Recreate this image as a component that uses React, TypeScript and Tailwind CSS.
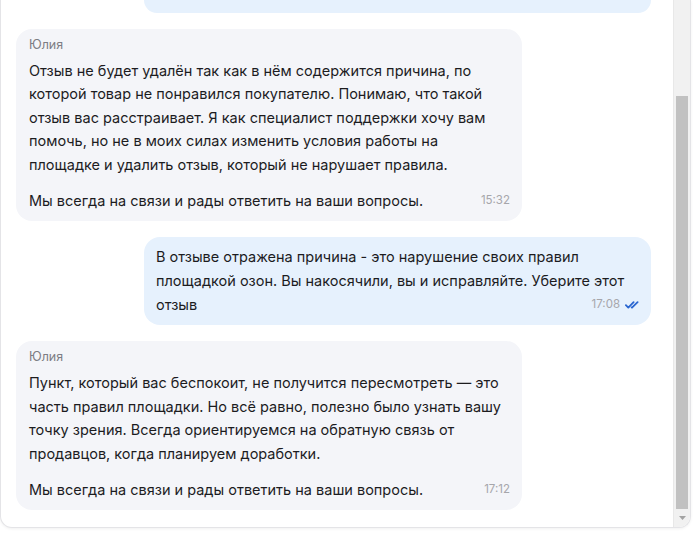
import React from "react";

const font = { fontFamily: "Inter, 'Noto Sans', sans-serif" };

function Time({ value, read }: { value: string; read?: boolean }) {
  return (
    <span className="absolute bottom-[9px] right-[12px] flex items-center gap-[5px] text-[11.5px] leading-[23px] text-[#a6a6ab]">
      {value}
      {read ? (
        <svg width="14" height="8" viewBox="0 0 14 8" fill="none">
          <path d="M0.9 4.2 L3.3 6.6 L8.6 1.2" stroke="#2a66d0" strokeWidth="1.8" strokeLinecap="round" strokeLinejoin="round" />
          <path d="M6.7 6.4 L7.0 6.7 L12.6 1.2" stroke="#2a66d0" strokeWidth="1.8" strokeLinecap="round" strokeLinejoin="round" />
        </svg>
      ) : null}
    </span>
  );
}

function SupportBubble({ paragraphs, time }: { paragraphs: string[]; time: string }) {
  return (
    <div className="relative w-[506px] rounded-[16px] bg-[#f4f5f9] px-[13px] pb-[9px] pt-[8px]">
      <p className="text-[12.5px] leading-[16px] text-[#7d7d84]">Юлия</p>
      <div className="mt-[6px] space-y-[13px] text-[14.5px] leading-[23.4px] text-[#1c1c1f]">
        {paragraphs.map((p, i) => (
          <p key={i}>
            {p}
            {i === paragraphs.length - 1 ? <span className="inline-block w-[56px]" /> : null}
          </p>
        ))}
      </div>
      <Time value={time} />
    </div>
  );
}

function UserBubble({ text, time }: { text: string; time: string }) {
  return (
    <div className="relative ml-auto w-[507px] rounded-[16px] bg-[#e6f1fd] px-[12px] pb-[8px] pt-[8px] text-[14.5px] leading-[24px] text-[#1c1c1f]">
      <p>
        {text}
        <span className="inline-block w-[70px]" />
      </p>
      <Time value={time} read />
    </div>
  );
}

export default function App() {
  return (
    <div className="h-[541px] w-[700px] bg-white" style={font}>
      <div className="flex h-[528px] w-[691px] overflow-hidden rounded-b-[12px] border border-t-0 border-[#e4e4e7] bg-white shadow-[0_1px_3px_rgba(0,0,0,0.06)]">
        <div className="flex flex-1 flex-col gap-[16px] pl-[15px] pr-[22px]">
          <div className="ml-auto h-[13px] w-[507px] rounded-b-[16px] bg-[#e6f1fd]" />
          <SupportBubble
            time="15:32"
            paragraphs={[
              "Отзыв не будет удалён так как в нём содержится причина, по которой товар не понравился покупателю. Понимаю, что такой отзыв вас расстраивает. Я как специалист поддержки хочу вам помочь, но не в моих силах изменить условия работы на площадке и удалить отзыв, который не нарушает правила.",
              "Мы всегда на связи и рады ответить на ваши вопросы.",
            ]}
          />
          <UserBubble
            time="17:08"
            text="В отзыве отражена причина - это нарушение своих правил площадкой озон. Вы накосячили, вы и исправляйте. Уберите этот отзыв"
          />
          <SupportBubble
            time="17:12"
            paragraphs={[
              "Пункт, который вас беспокоит, не получится пересмотреть — это часть правил площадки. Но всё равно, полезно было узнать вашу точку зрения. Всегда ориентируемся на обратную связь от продавцов, когда планируем доработки.",
              "Мы всегда на связи и рады ответить на ваши вопросы.",
            ]}
          />
        </div>
        <div className="flex w-[17px] flex-col border-l border-[#e8e8e8] bg-[#f1f1f1]">
          <div className="h-[96px]" />
          <div className="mx-[2px] h-[413px] bg-[#c1c1c1]" />
          <div className="flex flex-1 items-center justify-center">
            <svg width="7" height="4" viewBox="0 0 7 4">
              <path d="M0 0 L7 0 L3.5 4 Z" fill="#a3a3a3" />
            </svg>
          </div>
        </div>
      </div>
    </div>
  );
}
